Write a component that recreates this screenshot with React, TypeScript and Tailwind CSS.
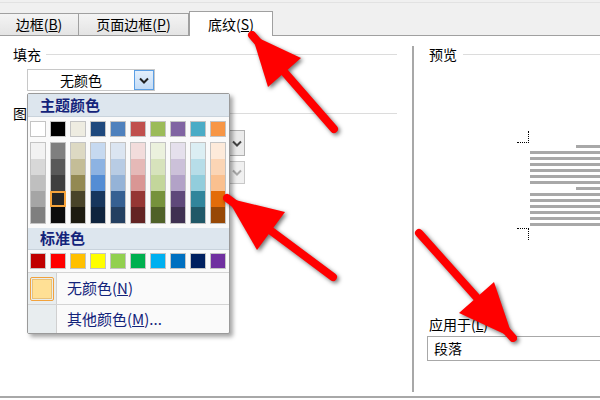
import React from "react"

const themeTop = ["#ffffff", "#000000", "#eeece1", "#1f497d", "#4f81bd", "#c0504d", "#9bbb59", "#8064a2", "#4bacc6", "#f79646"]

const shades = [
  ["#f2f2f2", "#d8d8d8", "#bfbfbf", "#a5a5a5", "#7f7f7f"],
  ["#7f7f7f", "#595959", "#3f3f3f", "#262626", "#0c0c0c"],
  ["#ddd9c3", "#c4bd97", "#938953", "#494429", "#1d1b10"],
  ["#c6d9f0", "#8db3e2", "#548dd4", "#17365d", "#0f243e"],
  ["#dbe5f1", "#b8cce4", "#95b3d7", "#366092", "#244061"],
  ["#f2dcdb", "#e5b9b7", "#d99694", "#953734", "#632423"],
  ["#ebf1dd", "#d7e3bc", "#c3d69b", "#76923c", "#4f6128"],
  ["#e5e0ec", "#ccc1d9", "#b2a2c7", "#5f497a", "#3f3151"],
  ["#dbeef3", "#b7dde8", "#92cddc", "#31859b", "#205867"],
  ["#fdeada", "#fbd5b5", "#fac08f", "#e36c09", "#974806"],
]

const standard = ["#c00000", "#ff0000", "#ffc000", "#ffff00", "#92d050", "#00b050", "#00b0f0", "#0070c0", "#002060", "#7030a0"]

function Chevron({ color = "#222" }: { color?: string }) {
  return (
    <svg width="10" height="7" viewBox="0 0 10 7">
      <polyline points="1,1.5 5,5.5 9,1.5" fill="none" stroke={color} strokeWidth="2" />
    </svg>
  )
}

function Tab({ label, k, w, active }: { label: string; k: string; w: string; active?: boolean }) {
  if (active) {
    return (
      <div className={`${w} h-[25px] bg-white border border-b-0 border-[#a0a0a0] flex items-center justify-center text-[14px] text-black`}>
        {label}(<span className="underline">{k}</span>)
      </div>
    )
  }
  return (
    <div className={`${w} h-[23px] bg-gradient-to-b from-[#f4f4f4] to-[#e4e4e4] border border-[#a0a0a0] border-l-0 first:border-l-0 flex items-center justify-center text-[14px] text-black`}>
      {label}(<span className="underline">{k}</span>)
    </div>
  )
}

function Arrow({ tail, tip, b1, b2 }: { tail: string; tip: string; b1: string; b2: string }) {
  const [tx, ty] = tail.split(",")
  const [px, py] = tip.split(",")
  return (
    <g>
      <line x1={tx} y1={ty} x2={px} y2={py} stroke="#ff0000" strokeWidth="8" strokeLinecap="round" />
      <polygon points={`${tip} ${b1} ${b2}`} fill="#ff0000" />
    </g>
  )
}

export default function App() {
  return (
    <div className="relative w-[600px] h-[400px] overflow-hidden bg-white font-['Noto_Sans_CJK_SC',sans-serif] text-black">
      {/* tab strip */}
      <div className="h-[36px] bg-[#f0f0f0] flex flex-col">
        <div className="h-[3px] border-b border-[#e2e2e2]" />
        <div className="flex items-end mt-auto">
          <Tab label="边框" k="B" w="w-[79px]" />
          <Tab label="页面边框" k="P" w="w-[110px]" />
          <Tab label="底纹" k="S" w="w-[84px]" active />
          <div className="flex-1 border-b border-[#a0a0a0]" />
        </div>
      </div>

      {/* body */}
      <div className="flex h-[362px] border-b-2 border-[#a8a8a8]">
        {/* left panel */}
        <div className="w-[412px] flex flex-col pt-[11px]">
          <div className="flex items-center h-[14px] pl-[13px] pr-[15px] text-[14px] leading-[14px]">
            <span>填充</span>
            <div className="flex-1 ml-[5px] h-px bg-[#dcdcdc]" />
          </div>
          <div className="ml-[27px] mt-[8px] w-[128px] h-[22px] border border-[#c8c8c8] flex">
            <div className="flex-1 flex items-center justify-center text-[14px]">无颜色</div>
            <div className="w-[20px] h-[20px] bg-gradient-to-b from-[#e3effc] to-[#c4dcf6] border border-[#5c9fe4] flex items-center justify-center">
              <Chevron />
            </div>
          </div>
          <div className="flex items-center h-[14px] mt-[15px] pl-[13px] pr-[15px] text-[14px] leading-[14px]">
            <span>图案</span>
            <div className="flex-1 ml-[5px] h-px bg-[#dcdcdc]" />
          </div>
          <div className="ml-[120px] mt-[10px] w-[125px] h-[26px] border border-[#b0b0b0] flex justify-end">
            <div className="w-[16px] bg-[#ebebeb] border-l border-[#b0b0b0] flex items-center justify-center">
              <Chevron color="#444" />
            </div>
          </div>
          <div className="ml-[120px] mt-[5px] w-[125px] h-[23px] border border-[#c8c8c8] flex justify-end">
            <div className="w-[16px] bg-[#f0f0f0] border-l border-[#c8c8c8] flex items-center justify-center">
              <Chevron color="#aaa" />
            </div>
          </div>
        </div>

        {/* right panel */}
        <div className="flex-1 flex flex-col pt-[10px]">
          <div className="h-[346px] border-l-2 border-[#a8a8a8] flex flex-col">
            <div className="flex items-center h-[14px] mt-px pl-[15px] text-[14px] leading-[14px]">
              <span>预览</span>
              <div className="flex-1 ml-[6px] h-px bg-[#dcdcdc]" />
            </div>
            <div className="ml-[103px] mt-[70px] flex flex-col">
              <div className="w-[12px] h-[12px] border-r border-b border-dotted border-black" />
              <div className="ml-[13px] mt-[2px] flex flex-col gap-[3px]">
                <div className="ml-auto w-[24px] h-[3px] bg-[#a8a8a8]" />
                {[0, 1, 2, 3, 4, 5].map((i) => (
                  <div key={i} className="h-[3px] bg-[#a8a8a8]" />
                ))}
                <div className="ml-auto w-[24px] h-[3px] bg-[#a8a8a8]" />
                {[0, 1, 2, 3, 4, 5].map((i) => (
                  <div key={i} className="h-[3px] bg-[#a8a8a8]" />
                ))}
              </div>
              <div className="mt-[2px] w-[12px] h-[12px] border-r border-t border-dotted border-black" />
            </div>
            <div className="mt-[77px] pl-[15px] text-[14px] leading-[14px]">
              应用于(<span className="underline">L</span>)
            </div>
            <div className="ml-[13px] mt-[5px] h-[25px] border border-[#a8a8a8] border-r-0 flex items-center pl-[6px] text-[14px]">
              段落
            </div>
          </div>
        </div>
      </div>

      {/* color popup */}
      <div className="absolute left-[27px] top-[93px] w-[203px] h-[241px] bg-[#fafafa] border border-[#9a9a9a] rounded-[2px] shadow-[3px_3px_4px_rgba(0,0,0,0.35)] flex flex-col">
        <div className="h-[23px] bg-[#dde6ee] border-b border-[#c9d3dc] flex items-center pl-[12px] text-[15px] font-bold text-[#13237a]">
          主题颜色
        </div>
        <div className="flex gap-[4px] pl-[2px] mt-[4px]">
          {themeTop.map((c) => (
            <div key={c} className="w-[16px] h-[16px] border border-[#c4c4c4]" style={{ background: c }} />
          ))}
        </div>
        <div className="flex gap-[4px] pl-[2px] mt-[5px]">
          {shades.map((col, ci) => (
            <div key={ci} className="w-[16px] border border-[#c4c4c4] flex flex-col">
              {col.map((c, ri) =>
                ci === 1 && ri === 3 ? (
                  <div key={ri} className="h-[16px] -mx-px border-2 border-[#f6a43c]" style={{ background: c }} />
                ) : (
                  <div key={ri} className="h-[16px]" style={{ background: c }} />
                )
              )}
            </div>
          ))}
        </div>
        <div className="mt-[4px] h-[22px] bg-[#dde6ee] border-b border-[#c9d3dc] flex items-center pl-[12px] text-[15px] font-bold text-[#13237a]">
          标准色
        </div>
        <div className="flex gap-[4px] pl-[2px] mt-[3px]">
          {standard.map((c) => (
            <div key={c} className="w-[16px] h-[16px] border border-[#c4c4c4]" style={{ background: c }} />
          ))}
        </div>
        <div className="mt-[3px] h-px bg-[#d4d4d4]" />
        <div className="h-[31px] flex">
          <div className="w-[29px] bg-[#e8edef] border-r border-[#d0d0d0] flex items-center justify-center">
            <div className="w-[24px] h-[24px] rounded-[2px] border border-[#f2a23c] p-px">
              <div className="w-full h-full bg-[#ffe095] border border-[#e9c27a]" />
            </div>
          </div>
          <div className="flex-1 flex items-center pl-[10px] text-[15px] text-[#13237a]">
            无颜色(<span className="underline">N</span>)
          </div>
        </div>
        <div className="h-px bg-[#d4d4d4]" />
        <div className="flex-1 flex">
          <div className="w-[29px] bg-[#e8edef] border-r border-[#d0d0d0]" />
          <div className="flex-1 flex items-center pl-[10px] text-[15px] text-[#13237a]">
            其他颜色(<span className="underline">M</span>)...
          </div>
        </div>
      </div>

      {/* red annotation arrows */}
      <svg className="absolute inset-0 pointer-events-none" width="600" height="400" style={{ filter: "drop-shadow(2px 2px 2px rgba(0,0,0,0.55))" }}>
        <Arrow tail="334,129" tip="252,35" b1="301,58" b2="268,87" />
        <Arrow tail="333,277" tip="227,198" b1="285,212" b2="257,250" />
        <Arrow tail="419,233" tip="513,338" b1="494,282" b2="459,313" />
      </svg>
    </div>
  )
}
